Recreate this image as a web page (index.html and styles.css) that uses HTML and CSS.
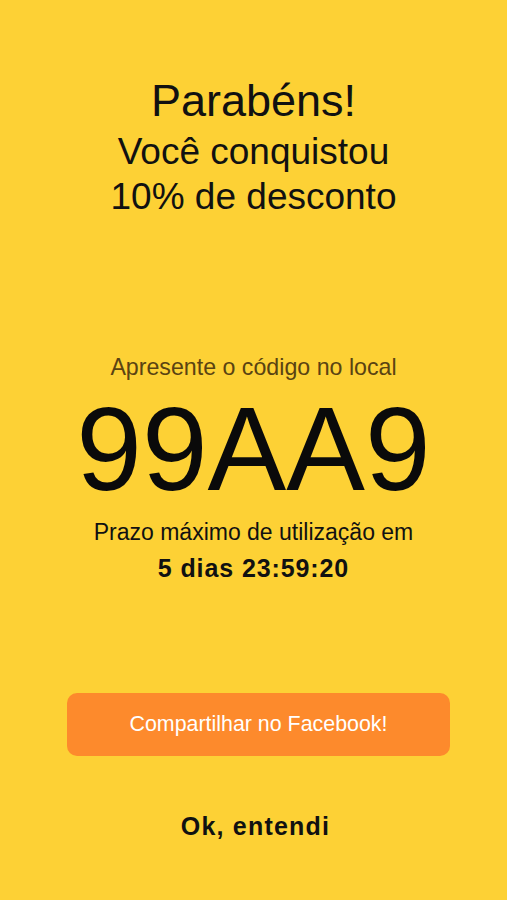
FILE: index.html
```html
<!DOCTYPE html>
<html lang="pt-BR">
<head>
    <meta charset="UTF-8">
    <meta name="viewport" content="width=device-width, initial-scale=1.0">
    <title>Cupom</title>
    <link rel="stylesheet" href="styles.css">
</head>
<body>
    <div class="screen">
        <div class="header">
            <h1 class="title">Parabéns!</h1>
            <p class="subtitle">Você conquistou<br>10% de desconto</p>
        </div>
        <div class="coupon">
            <p class="hint">Apresente o código no local</p>
            <div class="code">99AA9</div>
            <p class="deadline">Prazo máximo de utilização em</p>
            <p class="timer">5 dias 23:59:20</p>
        </div>
        <div class="actions">
            <button class="share" type="button">Compartilhar no Facebook!</button>
            <button class="ok" type="button">Ok, entendi</button>
        </div>
    </div>
</body>
</html>
```

FILE: styles.css
```css
body {
    margin: 0;
    background-color: #fdd135;
    font-family: "Liberation Sans", Arial, sans-serif;
    color: #111;
}
.screen {
    height: 900px;
    display: flex;
    flex-direction: column;
    align-items: center;
    text-align: center;
}
.header {
    padding-top: 76px;
}
.title {
    margin: 0;
    font-size: 45px;
    font-weight: normal;
    line-height: 50px;
}
.subtitle {
    margin: 3px 0 0;
    font-size: 37px;
    line-height: 45px;
}
.coupon {
    margin-top: 134px;
}
.hint {
    margin: 0;
    font-size: 23.2px;
    line-height: 28px;
    color: #5a4312;
}
.code {
    margin-top: 9px;
    font-size: 118px;
    line-height: 118px;
    color: #0a0a0a;
}
.deadline {
    margin: 6px 0 0;
    font-size: 23px;
    line-height: 36px;
}
.timer {
    margin: 0;
    font-size: 25px;
    font-weight: bold;
    letter-spacing: 0.9px;
    line-height: 36px;
}
.actions {
    margin: 107px 0 0 10px;
    width: 383px;
    display: flex;
    flex-direction: column;
    align-items: center;
}
.share {
    width: 100%;
    height: 63px;
    border: none;
    border-radius: 10px;
    background-color: #fd8a2c;
    color: #fff;
    font-family: inherit;
    font-size: 21.4px;
    cursor: pointer;
}
.ok {
    margin: 56px 6px 0 0;
    padding: 0;
    border: none;
    background: none;
    color: #111;
    font-family: inherit;
    font-size: 25px;
    font-weight: bold;
    letter-spacing: 1.2px;
    cursor: pointer;
}
```
